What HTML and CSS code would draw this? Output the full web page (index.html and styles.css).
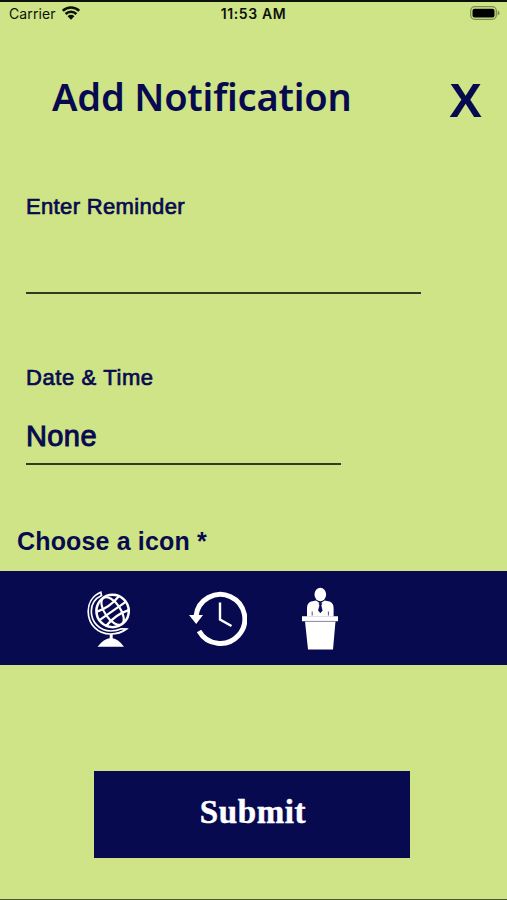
FILE: index.html
```html
<!DOCTYPE html>
<html lang="en">
<head>
    <meta charset="UTF-8">
    <meta name="viewport" content="width=device-width, initial-scale=1.0">
    <title>Add Notification</title>
    <link rel="stylesheet" href="styles.css">
</head>
<body>
    <div class="screen">
        <div class="status-bar">
            <div class="carrier">
                <span class="carrier-name">Carrier</span>
                <svg class="wifi" width="18" height="14" viewBox="0 0 18 14">
                    <path d="M.8 4.8a11.7 11.7 0 0 1 16.4 0M3.6 8a7.6 7.6 0 0 1 10.8 0" fill="none" stroke="#0c1208" stroke-width="2.5"/>
                    <path d="M5.6 10.2a4.8 4.8 0 0 1 6.8 0L9 13.8z" fill="#0c1208"/>
                </svg>
            </div>
            <span class="time">11:53 AM</span>
            <svg class="battery" width="30" height="14" viewBox="0 0 30 14">
                <rect x=".7" y=".7" width="25.6" height="12.6" rx="4" fill="none" stroke="#7d8c52" stroke-width="1.3"/>
                <rect x="2.5" y="2.7" width="22" height="8.8" rx="2" fill="#000"/>
                <path d="M27.6 4.6q2 .8 2 2.4t-2 2.4z" fill="#7d8c52"/>
            </svg>
        </div>

        <div class="header">
            <h1 class="title">Add Notification</h1>
            <button class="close">X</button>
        </div>

        <div class="field reminder">
            <label class="field-label">Enter Reminder</label>
            <div class="field-value"></div>
        </div>

        <div class="field date">
            <label class="field-label">Date &amp; Time</label>
            <div class="field-value">None</div>
        </div>

        <h2 class="icon-heading">Choose a icon *</h2>
        <div class="icon-bar">
            <svg class="icon-globe" width="44" height="56" viewBox="0 0 44 56" fill="none" stroke="#fff">
                <circle cx="25.6" cy="20" r="16.2" stroke-width="2.5"/>
                <g transform="rotate(-35 25.6 20)" stroke-width="2.2">
                    <ellipse cx="25.6" cy="20" rx="7.8" ry="16"/>
                    <path d="M9.6 20h32M12 11.5q13.6 4 27.2 0M12 28.5q13.6-4 27.2 0"/>
                </g>
                <path d="M13.8 1.2C4.8 5 1.2 13 1.2 20.200C1.2 33.500 11 43 23.500 43Q33 43 39.500 38L34.500 37.800Q29.500 40 24 40C12.500 40 4.300 31 4.300 20.200C4.300 13.500 8 7.500 14.500 4.500z" stroke-width="1.700"/>
                <path d="M24.2 43v5" stroke-width="3"/>
                <path d="M10.5 55.8q6-8 13.5-8.8 7.5.8 13 8.8z" fill="#fff" stroke="none"/>
            </svg>
            <svg class="icon-history" width="58" height="56" viewBox="0 0 58 56" fill="none" stroke="#fff">
                <path d="M7 25A24.5 24.5 0 1 1 10 40" stroke-width="5"/>
                <path d="M0 24h14L7.2 33z" fill="#fff" stroke="none"/>
                <path d="M31 11.5v17l11.5 6.5" stroke-width="2.4"/>
            </svg>
            <svg class="icon-podium" width="36" height="64" viewBox="0 0 36 64">
                <ellipse cx="18.3" cy="7.5" rx="5.8" ry="6.8" fill="#fff"/>
                <path d="M5 29.5V21q0-5 4-6.5l5-1 4.3 3 4.3-3 5 1q4 1.5 4 6.5v8.5z" fill="#fff"/>
                <path d="M17 16.5h2.8l-.8 2 1.2 5-1.9 2.2-1.8-2.2 1.2-5zM10.2 24.5v4M26.4 24.5v4" fill="#080a50" stroke="#080a50" stroke-width=".7"/>
                <path d="M0 29.2h36v5H33.5L31 62.5H6L3 34.2H0z" fill="#fff"/>
                <path d="M3 34.4h30.5" stroke="#080a50" stroke-width=".5"/>
            </svg>
        </div>

        <button class="submit">Submit</button>
    </div>
</body>
</html>
```
FILE: styles.css
```css
* {
    box-sizing: border-box;
}

body {
    margin: 0;
    background-color: #cee486;
    color: #080a50;
    font-family: "Liberation Sans", Arial, sans-serif;
}

.screen {
    height: 900px;
    border-top: 2px solid #0c1208;
    border-bottom: 1px solid #4b5730;
    display: flex;
    flex-direction: column;
    overflow: hidden;
}

.status-bar {
    display: grid;
    grid-template-columns: 1fr auto 1fr;
    align-items: center;
    height: 23px;
    padding: 0 7px 0 9px;
    font-family: Inter, sans-serif;
    font-size: 14px;
    color: #0c1208;
}

.carrier {
    display: flex;
    align-items: center;
    gap: 6px;
}

.carrier-name {
    letter-spacing: 0.1px;
}

.wifi {
    margin-top: -2px;
}

.time {
    font-weight: 600;
    letter-spacing: 0.6px;
    margin-left: -2px;
}

.battery {
    justify-self: end;
    margin-top: -1px;
}

.header {
    display: flex;
    justify-content: space-between;
    height: 132px;
    padding: 45px 25px 0 52px;
}

.title {
    margin: 0;
    font-family: "Noto Sans", sans-serif;
    font-size: 38px;
    font-weight: 600;
    line-height: 52px;
    letter-spacing: -0.2px;
    white-space: nowrap;
}

.close {
    margin: 3px 0 0;
    padding: 0;
    border: none;
    background: none;
    color: #080a50;
    font-family: "Liberation Sans", Arial, sans-serif;
    font-size: 49px;
    font-weight: bold;
    line-height: 54px;
    height: 54px;
}

.field {
    display: flex;
    flex-direction: column;
    margin-left: 26px;
    border-bottom: 2px solid #303b25;
}

.field-label {
    padding-top: 35px;
    font-size: 22px;
    line-height: 30px;
    letter-spacing: 0.35px;
    -webkit-text-stroke: 0.7px #080a50;
}

.reminder {
    width: 395px;
    height: 137px;
}

.date {
    width: 315px;
    height: 171px;
}

.date .field-label {
    padding-top: 69px;
    letter-spacing: 0.6px;
}

.field-value {
    margin-top: 25px;
    font-size: 29px;
    line-height: 36px;
    letter-spacing: 0.4px;
    -webkit-text-stroke: 1px #080a50;
}

.icon-heading {
    margin: 60px 0 0 17px;
    font-size: 25px;
    line-height: 32px;
    height: 46px;
    letter-spacing: 0.15px;
}

.icon-bar {
    display: flex;
    align-items: center;
    height: 94px;
    padding: 2px 0 0 87px;
    background-color: #080a50;
    flex-shrink: 0;
}

.icon-history {
    margin-left: 58px;
}

.icon-podium {
    margin-left: 55px;
}

.submit {
    width: 316px;
    height: 87px;
    margin: 106px 0 0 94px;
    padding: 0 0 5px 2px;
    border: none;
    background-color: #080a50;
    color: #fff;
    font-family: "Liberation Serif", "Times New Roman", serif;
    font-size: 33px;
    font-weight: bold;
    letter-spacing: 0.6px;
    -webkit-text-stroke: 0.5px #fff;
}
```
